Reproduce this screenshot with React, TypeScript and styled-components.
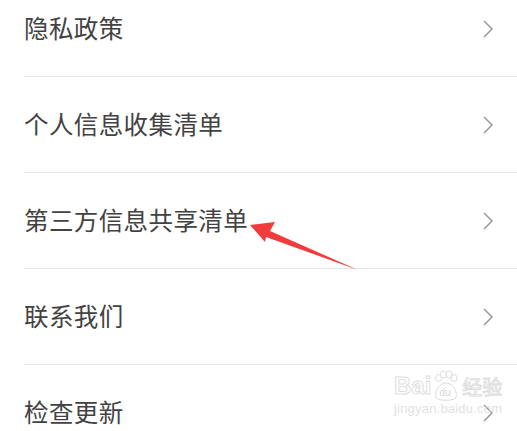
import React from 'react';
import styled, { createGlobalStyle } from 'styled-components';

const GlobalStyle = createGlobalStyle`
  html, body {
    margin: 0;
    padding: 0;
    background: #ffffff;
    overflow: hidden;
  }
  body {
    font-family: "Noto Sans CJK SC", "Noto Sans", sans-serif;
  }
`;

const Page = styled.div`
  position: relative;
  width: 517px;
  height: 431px;
  overflow: hidden;
  background: #fff;
`;

const List = styled.ul`
  list-style: none;
  margin: -19px 0 0 0;
  padding: 0;
`;

const Row = styled.li`
  display: flex;
  align-items: center;
  justify-content: space-between;
  height: 95px;
  margin-left: 24px;
  padding-right: 23px;
  border-bottom: 1px solid #e6e6e6;
`;

const Label = styled.span`
  font-size: 24.5px;
  color: #424242;
  letter-spacing: 0.4px;
  line-height: 1;
`;

const Chevron = () => (
  <svg width="12" height="20" viewBox="0 0 12 20">
    <polyline points="2,2 10,10 2,18" fill="none" stroke="#9a9a9a" strokeWidth="1.5" />
  </svg>
);

const Arrow = styled.svg`
  position: absolute;
  left: 0;
  top: 0;
  pointer-events: none;
`;

const Watermark = styled.div`
  position: absolute;
  left: 394px;
  top: 370px;
  display: flex;
  flex-direction: column;
  align-items: flex-start;
  pointer-events: none;
`;

const MarkTop = styled.div`
  display: flex;
  align-items: center;
  gap: 1px;
`;

const MarkWord = styled.span`
  font-family: "Liberation Sans", sans-serif;
  font-size: 24px;
  font-weight: 700;
  color: #fff;
  -webkit-text-stroke: 1px #e0e0e0;
`;

const MarkCn = styled.span`
  font-size: 20px;
  color: #fff;
  -webkit-text-stroke: 1px #dedede;
  margin-left: 1px;
`;

const MarkUrl = styled.span`
  font-family: "Liberation Sans", sans-serif;
  font-size: 13px;
  color: #e2e2e2;
  letter-spacing: 0.2px;
  margin-top: -1px;
`;

const items = ['隐私政策', '个人信息收集清单', '第三方信息共享清单', '联系我们', '检查更新'];

export default function App() {
  return (
    <Page>
      <GlobalStyle />
      <List>
        {items.map((t) => (
          <Row key={t}>
            <Label>{t}</Label>
            <Chevron />
          </Row>
        ))}
      </List>
      <Watermark>
        <MarkTop>
          <MarkWord>Bai</MarkWord>
          <svg width="28" height="32" viewBox="0 0 28 32">
            <g fill="#fff" stroke="#dcdcdc" strokeWidth="1">
              <ellipse cx="6.5" cy="8" rx="3" ry="3.5" />
              <ellipse cx="11.5" cy="4.5" rx="3" ry="3.5" />
              <ellipse cx="17" cy="4.5" rx="3" ry="3.5" />
              <ellipse cx="22" cy="8" rx="3" ry="3.5" />
              <path d="M4 28 C2 19 9 13 14 13 C19 13 26 19 24 28 C20 31 8 31 4 28 Z" />
            </g>
            <text x="7.5" y="26" fontSize="10" fontFamily="Liberation Sans, sans-serif" fill="#d8d8d8">du</text>
          </svg>
          <MarkCn>经验</MarkCn>
        </MarkTop>
        <MarkUrl>jingyan.baidu.com</MarkUrl>
      </Watermark>
      <Arrow width="517" height="431" viewBox="0 0 517 431">
        <polygon
          points="250,225 275,222 270,231 358,270 266,237 265,242"
          fill="#f03c3c"
        />
      </Arrow>
    </Page>
  );
}
